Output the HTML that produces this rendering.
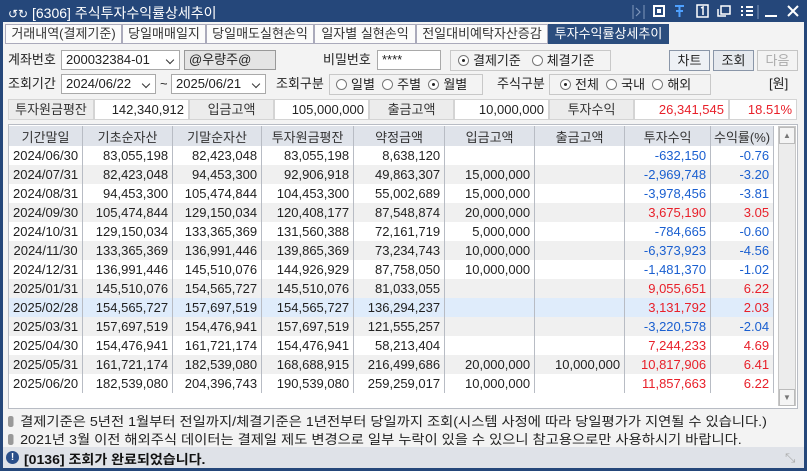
<!DOCTYPE html>
<html><head><meta charset="utf-8"><style>
*{margin:0;padding:0;box-sizing:border-box}
body{width:807px;height:471px;overflow:hidden;background:#25477a;font-family:"Liberation Sans","Noto Sans CJK KR","NanumGothic",sans-serif;font-size:13px;color:#222;position:relative}
.a{position:absolute}
#main{left:3px;top:22px;width:801px;height:425px;background:#f3f3f3}
.title{left:8px;top:3px;color:#fff;font-size:14px}
.tab{top:24px;height:20px;border:1px solid #aab;background:#fbfbfb;font-size:13px;line-height:18px;text-align:center;color:#333}
.tab.on{background:#2b4d7e;color:#fff;border-color:#2b4d7e}
.box{border:1px solid #a9a9a9;background:#fff;height:20px;line-height:18px;padding-left:4px;font-size:13px}
.chev{position:absolute;right:6px;top:6px;width:6px;height:6px;border-right:1.5px solid #333;border-bottom:1.5px solid #333;transform:rotate(45deg)}
.lbl{font-size:13px;line-height:20px}
.grp{border:1px solid #c8c8c8;height:21px;background:#f3f3f3}
.rad{display:inline-block;width:11px;height:11px;border:1px solid #777;border-radius:50%;background:#fff;vertical-align:-1px;margin-right:4px;position:relative}
.rad.on::after{content:"";position:absolute;left:3px;top:3px;width:3px;height:3px;background:#222;border-radius:50%}
.btn{top:50px;height:21px;border:1px solid #8a96a8;background:#eef1f5;text-align:center;line-height:19px;font-size:13px}
.sum{top:99px;height:21px;line-height:20px;font-size:13px;border:1px solid #d4d4d4}
.sl{background:#ececec;text-align:center;color:#333}
.sv{background:#fff;text-align:right;padding-right:4px}
table{border-collapse:collapse;font-size:13px}
td{height:19px;padding:0 4px;text-align:right;border-right:1px solid #b8bcc4;white-space:nowrap}
th{height:20px;font-weight:normal;background:#dfe3ea;border-right:1px solid #b8bcc4;text-align:center;color:#333}
tr.g td{background:#f0f0f0}
tr.h td{background:#dfecfb}
td:first-child{text-align:center}
.r{color:#e8202a}.b{color:#1a5fd0}
.note{left:8px;font-size:13px;color:#222;transform:scaleX(1.1);transform-origin:left;white-space:nowrap}
.note::before{content:"";display:inline-block;width:5px;height:11px;background:#999;border-radius:2px;margin-right:6px;vertical-align:-1px}
</style></head><body>
<div class="a title"><span style="font-size:12px">&#x21BA;&#x21BB;</span> [6306] 주식투자수익률상세추이</div>
<svg class="a" style="left:628px;top:0" width="179" height="22" viewBox="628 0 179 22">
<g fill="none" stroke="#fff" stroke-width="2">
<line x1="633" y1="5" x2="633" y2="19" stroke="#7f97bb" stroke-width="1"/>
<polyline points="636,8 640,12 636,16" stroke="#7f97bb" stroke-width="1.2"/>
<line x1="644" y1="5" x2="644" y2="19" stroke="#7f97bb" stroke-width="1"/>
<rect x="654" y="6" width="10" height="10"/>
<rect x="657" y="9" width="4" height="4" fill="#fff" stroke="none"/>
<path d="M675 6h9M679.5 6v11M676 11h7" stroke="#4ea0ff"/>
<rect x="697" y="5" width="11" height="12" stroke-width="1.5"/>
<path d="M701 8l2-1v8" stroke-width="1.5"/>
<rect x="721" y="6" width="9" height="8" stroke-width="1.5"/>
<path d="M718 9v7h8" stroke-width="1.5"/>
<path d="M741 7h2M741 11h2M741 15h2M746 7h7M746 11h7M746 15h7"/>
<line x1="758" y1="5" x2="758" y2="19" stroke="#7f97bb" stroke-width="1"/>
<line x1="765" y1="16" x2="777" y2="16"/>
<path d="M788 6l10 10M798 6l-10 10"/>
</g></svg>
<div class="a" id="main"></div>
<div class="a tab" style="left:5px;width:117px">거래내역(결제기준)</div>
<div class="a tab" style="left:122px;width:84px">당일매매일지</div>
<div class="a tab" style="left:206px;width:108px">당일매도실현손익</div>
<div class="a tab" style="left:314px;width:102px">일자별 실현손익</div>
<div class="a tab" style="left:416px;width:132px">전일대비예탁자산증감</div>
<div class="a tab on" style="left:548px;width:121px">투자수익률상세추이</div>

<div class="a lbl" style="left:8px;top:50px">계좌번호</div>
<div class="a box" style="left:61px;top:50px;width:119px">200032384-01<span class="chev"></span></div>
<div class="a box" style="left:184px;top:50px;width:92px;background:#e4e4e4;border-color:#999">@우량주@</div>
<div class="a lbl" style="left:323px;top:50px">비밀번호</div>
<div class="a box" style="left:377px;top:50px;width:64px">****</div>
<div class="a grp" style="left:450px;top:50px;width:161px;line-height:20px;padding-left:7px"><span class="rad on"></span>결제기준 &nbsp;&nbsp;<span class="rad"></span>체결기준</div>
<div class="a btn" style="left:669px;width:41px">차트</div>
<div class="a btn" style="left:713px;width:41px;background:#e6e9ee">조회</div>
<div class="a btn" style="left:757px;width:41px;color:#aaa;border-color:#c4c4c4;background:#f3f3f3">다음</div>

<div class="a lbl" style="left:8px;top:74px">조회기간</div>
<div class="a box" style="left:61px;top:74px;width:95px">2024/06/22<span class="chev"></span></div>
<div class="a lbl" style="left:160px;top:74px">~</div>
<div class="a box" style="left:171px;top:74px;width:95px">2025/06/21<span class="chev"></span></div>
<div class="a lbl" style="left:276px;top:74px">조회구분</div>
<div class="a grp" style="left:329px;top:74px;width:154px;line-height:20px;padding-left:6px"><span class="rad"></span>일별 &nbsp;<span class="rad"></span>주별 &nbsp;<span class="rad on"></span>월별</div>
<div class="a lbl" style="left:497px;top:74px">주식구분</div>
<div class="a grp" style="left:549px;top:74px;width:162px;line-height:20px;padding-left:10px"><span class="rad on"></span>전체 &nbsp;<span class="rad"></span>국내 &nbsp;<span class="rad"></span>해외</div>
<div class="a lbl" style="left:769px;top:74px">[원]</div>

<div class="a sum sl" style="left:8px;width:86px">투자원금평잔</div>
<div class="a sum sv" style="left:94px;width:95px">142,340,912</div>
<div class="a sum sl" style="left:189px;width:85px">입금고액</div>
<div class="a sum sv" style="left:274px;width:95px">105,000,000</div>
<div class="a sum sl" style="left:369px;width:85px">출금고액</div>
<div class="a sum sv" style="left:454px;width:95px">10,000,000</div>
<div class="a sum sl" style="left:549px;width:85px">투자수익</div>
<div class="a sum sv r" style="left:634px;width:95px">26,341,545</div>
<div class="a sum sv r" style="left:729px;width:68px">18.51%</div>

<div class="a" style="left:8px;top:124px;width:790px;height:285px;background:#fff;border:1px solid #b8bcc4"></div>
<div class="a" style="left:9px;top:126px">
<table>
<tr><th style="width:69px">기간말일</th><th style="width:90px">기초순자산</th><th style="width:89px">기말순자산</th><th style="width:92px">투자원금평잔</th><th style="width:91px">약정금액</th><th style="width:90px">입금고액</th><th style="width:90px">출금고액</th><th style="width:86px">투자수익</th><th style="width:63px">수익률(%)</th></tr>
<tr><td>2024/06/30</td><td>83,055,198</td><td>82,423,048</td><td>83,055,198</td><td>8,638,120</td><td></td><td></td><td class="b">-632,150</td><td class="b">-0.76</td></tr>
<tr class="g"><td>2024/07/31</td><td>82,423,048</td><td>94,453,300</td><td>92,906,918</td><td>49,863,307</td><td>15,000,000</td><td></td><td class="b">-2,969,748</td><td class="b">-3.20</td></tr>
<tr><td>2024/08/31</td><td>94,453,300</td><td>105,474,844</td><td>104,453,300</td><td>55,002,689</td><td>15,000,000</td><td></td><td class="b">-3,978,456</td><td class="b">-3.81</td></tr>
<tr class="g"><td>2024/09/30</td><td>105,474,844</td><td>129,150,034</td><td>120,408,177</td><td>87,548,874</td><td>20,000,000</td><td></td><td class="r">3,675,190</td><td class="r">3.05</td></tr>
<tr><td>2024/10/31</td><td>129,150,034</td><td>133,365,369</td><td>131,560,388</td><td>72,161,719</td><td>5,000,000</td><td></td><td class="b">-784,665</td><td class="b">-0.60</td></tr>
<tr class="g"><td>2024/11/30</td><td>133,365,369</td><td>136,991,446</td><td>139,865,369</td><td>73,234,743</td><td>10,000,000</td><td></td><td class="b">-6,373,923</td><td class="b">-4.56</td></tr>
<tr><td>2024/12/31</td><td>136,991,446</td><td>145,510,076</td><td>144,926,929</td><td>87,758,050</td><td>10,000,000</td><td></td><td class="b">-1,481,370</td><td class="b">-1.02</td></tr>
<tr class="g"><td>2025/01/31</td><td>145,510,076</td><td>154,565,727</td><td>145,510,076</td><td>81,033,055</td><td></td><td></td><td class="r">9,055,651</td><td class="r">6.22</td></tr>
<tr class="h"><td>2025/02/28</td><td>154,565,727</td><td>157,697,519</td><td>154,565,727</td><td>136,294,237</td><td></td><td></td><td class="r">3,131,792</td><td class="r">2.03</td></tr>
<tr class="g"><td>2025/03/31</td><td>157,697,519</td><td>154,476,941</td><td>157,697,519</td><td>121,555,257</td><td></td><td></td><td class="b">-3,220,578</td><td class="b">-2.04</td></tr>
<tr><td>2025/04/30</td><td>154,476,941</td><td>161,721,174</td><td>154,476,941</td><td>58,213,404</td><td></td><td></td><td class="r">7,244,233</td><td class="r">4.69</td></tr>
<tr class="g"><td>2025/05/31</td><td>161,721,174</td><td>182,539,080</td><td>168,688,915</td><td>216,499,686</td><td>20,000,000</td><td>10,000,000</td><td class="r">10,817,906</td><td class="r">6.41</td></tr>
<tr><td>2025/06/20</td><td>182,539,080</td><td>204,396,743</td><td>190,539,080</td><td>259,259,017</td><td>10,000,000</td><td></td><td class="r">11,857,663</td><td class="r">6.22</td></tr>
</table></div>
<div class="a" style="left:778px;top:126px;width:18px;height:280px;background:#ececec;border:1px solid #c8c8c8"></div>
<div class="a" style="left:779px;top:127px;width:16px;height:17px;background:#f4f4f4;border:1px solid #bbb;font-size:8px;text-align:center;line-height:15px;color:#777">▲</div>
<div class="a" style="left:779px;top:389px;width:16px;height:17px;background:#f4f4f4;border:1px solid #bbb;font-size:8px;text-align:center;line-height:15px;color:#777">▼</div>

<div class="a note" style="top:411px">결제기준은 5년전 1월부터 전일까지/체결기준은 1년전부터 당일까지 조회(시스템 사정에 따라 당일평가가 지연될 수 있습니다.)</div>
<div class="a note" style="top:429px">2021년 3월 이전 해외주식 데이터는 결제일 제도 변경으로 일부 누락이 있을 수 있으니 참고용으로만 사용하시기 바랍니다.</div>

<div class="a" style="left:3px;top:447px;width:801px;height:21px;background:#dfe2e8"></div>
<div class="a" style="left:6px;top:451px;width:13px;height:13px;border-radius:50%;background:#2a4f8a;color:#fff;font-size:10px;font-weight:bold;text-align:center;line-height:13px">!</div>
<div class="a" style="left:24px;top:449px;font-size:13px;font-weight:bold;color:#111;transform:scaleX(1.08);transform-origin:left">[0136] 조회가 완료되었습니다.</div>
<div class="a" style="left:785px;top:450px;color:#aaa;font-size:13px">⤡</div>
</body></html>
